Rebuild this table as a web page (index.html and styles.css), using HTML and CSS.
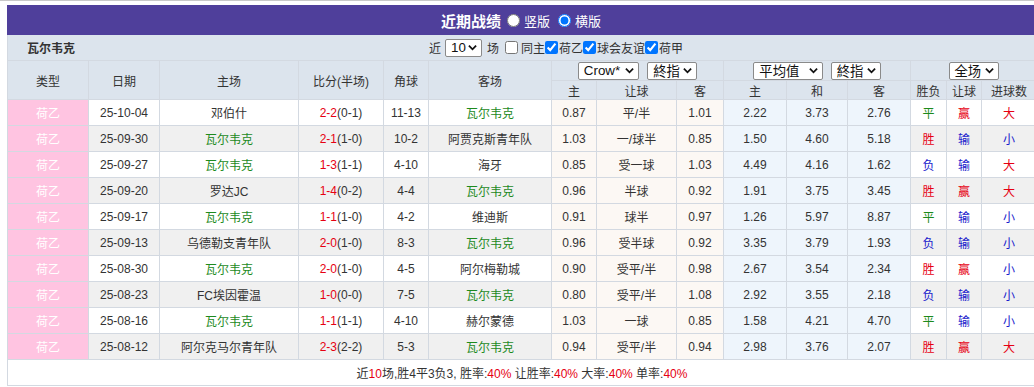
FILE: index.html
```html
<!DOCTYPE html>
<html lang="zh-cn">
<head>
    <meta charset="UTF-8">
    <title>近期战绩</title>
    <link rel="stylesheet" href="styles.css">
</head>
<body>
    <div class="linha-topo"></div>
    <div class="box">
        <div class="box-title">
            <span class="titulo">近期战绩</span>
            <label class="opt"><input type="radio" name="ver">竖版</label>
            <label class="opt"><input type="radio" name="ver" checked>横版</label>
        </div>
        <div class="box-sub">
            <span class="team-name">瓦尔韦克</span>
            <span class="filtros"><span class="txt">近</span><span class="sel w-10">10<svg class="arr" viewBox="0 0 10 7" width="9" height="7"><path d="M1 1.5l4 4 4-4" fill="none" stroke="#111" stroke-width="2"/></svg></span><span class="txt">场</span><input type="checkbox" class="cb-first"><span>同主</span><input type="checkbox" checked><span>荷乙</span><input type="checkbox" checked><span>球会友谊</span><input type="checkbox" checked><span>荷甲</span></span>
        </div>
        <table class="zhanji">
            <colgroup>
                <col style="width:81px"><col style="width:71px"><col style="width:139px"><col style="width:85px">
                <col style="width:45px"><col style="width:123px"><col style="width:45px"><col style="width:80px">
                <col style="width:47px"><col style="width:63px"><col style="width:61px"><col style="width:63px">
                <col style="width:36px"><col style="width:35px"><col style="width:55px">
            </colgroup>
            <thead>
                <tr class="h1">
                    <th rowspan="2">类型</th>
                    <th rowspan="2">日期</th>
                    <th rowspan="2">主场</th>
                    <th rowspan="2">比分(半场)</th>
                    <th rowspan="2">角球</th>
                    <th rowspan="2">客场</th>
                    <th colspan="3">
                        <span class="sel w-crow">Crow*<svg class="arr" viewBox="0 0 10 7" width="9" height="7"><path d="M1 1.5l4 4 4-4" fill="none" stroke="#111" stroke-width="2"/></svg></span>
                        <span class="sel w-zz">終指<svg class="arr" viewBox="0 0 10 7" width="9" height="7"><path d="M1 1.5l4 4 4-4" fill="none" stroke="#111" stroke-width="2"/></svg></span>
                    </th>
                    <th colspan="3">
                        <span class="sel w-avg">平均值<svg class="arr" viewBox="0 0 10 7" width="9" height="7"><path d="M1 1.5l4 4 4-4" fill="none" stroke="#111" stroke-width="2"/></svg></span>
                        <span class="sel w-zz">終指<svg class="arr" viewBox="0 0 10 7" width="9" height="7"><path d="M1 1.5l4 4 4-4" fill="none" stroke="#111" stroke-width="2"/></svg></span>
                    </th>
                    <th colspan="3">
                        <span class="sel w-zz">全场<svg class="arr" viewBox="0 0 10 7" width="9" height="7"><path d="M1 1.5l4 4 4-4" fill="none" stroke="#111" stroke-width="2"/></svg></span>
                    </th>
                </tr>
                <tr class="h2">
                    <th>主</th><th>让球</th><th>客</th>
                    <th>主</th><th>和</th><th>客</th>
                    <th>胜负</th><th>让球</th><th>进球数</th>
                </tr>
            </thead>
            <tbody>
                <tr>
                    <td class="liga">荷乙</td><td>25-10-04</td><td>邓伯什</td>
                    <td><span class="placar">2-2</span>(0-1)</td><td>11-13</td><td class="time">瓦尔韦克</td>
                    <td class="hc">0.87</td><td class="hc">平/半</td><td class="hc">1.01</td>
                    <td class="eu">2.22</td><td class="eu">3.73</td><td class="eu">2.76</td>
                    <td class="ping">平</td><td class="sheng">赢</td><td class="sheng">大</td>
                </tr>
                <tr class="cinza">
                    <td class="liga">荷乙</td><td>25-09-30</td><td class="time">瓦尔韦克</td>
                    <td><span class="placar">2-1</span>(1-0)</td><td>10-2</td><td>阿贾克斯青年队</td>
                    <td class="hc">1.03</td><td class="hc">一/球半</td><td class="hc">0.85</td>
                    <td class="eu">1.50</td><td class="eu">4.60</td><td class="eu">5.18</td>
                    <td class="sheng">胜</td><td class="fu">输</td><td class="fu">小</td>
                </tr>
                <tr>
                    <td class="liga">荷乙</td><td>25-09-27</td><td class="time">瓦尔韦克</td>
                    <td><span class="placar">1-3</span>(1-1)</td><td>4-10</td><td>海牙</td>
                    <td class="hc">0.85</td><td class="hc">受一球</td><td class="hc">1.03</td>
                    <td class="eu">4.49</td><td class="eu">4.16</td><td class="eu">1.62</td>
                    <td class="fu">负</td><td class="fu">输</td><td class="sheng">大</td>
                </tr>
                <tr class="cinza">
                    <td class="liga">荷乙</td><td>25-09-20</td><td>罗达JC</td>
                    <td><span class="placar">1-4</span>(0-2)</td><td>4-4</td><td class="time">瓦尔韦克</td>
                    <td class="hc">0.96</td><td class="hc">半球</td><td class="hc">0.92</td>
                    <td class="eu">1.91</td><td class="eu">3.75</td><td class="eu">3.45</td>
                    <td class="sheng">胜</td><td class="sheng">赢</td><td class="sheng">大</td>
                </tr>
                <tr>
                    <td class="liga">荷乙</td><td>25-09-17</td><td class="time">瓦尔韦克</td>
                    <td><span class="placar">1-1</span>(1-0)</td><td>4-2</td><td>维迪斯</td>
                    <td class="hc">0.91</td><td class="hc">球半</td><td class="hc">0.97</td>
                    <td class="eu">1.26</td><td class="eu">5.97</td><td class="eu">8.87</td>
                    <td class="ping">平</td><td class="fu">输</td><td class="fu">小</td>
                </tr>
                <tr class="cinza">
                    <td class="liga">荷乙</td><td>25-09-13</td><td>乌德勒支青年队</td>
                    <td><span class="placar">2-0</span>(1-0)</td><td>8-3</td><td class="time">瓦尔韦克</td>
                    <td class="hc">0.96</td><td class="hc">受半球</td><td class="hc">0.92</td>
                    <td class="eu">3.35</td><td class="eu">3.79</td><td class="eu">1.93</td>
                    <td class="fu">负</td><td class="fu">输</td><td class="fu">小</td>
                </tr>
                <tr>
                    <td class="liga">荷乙</td><td>25-08-30</td><td class="time">瓦尔韦克</td>
                    <td><span class="placar">2-0</span>(1-0)</td><td>4-5</td><td>阿尔梅勒城</td>
                    <td class="hc">0.90</td><td class="hc">受平/半</td><td class="hc">0.98</td>
                    <td class="eu">2.67</td><td class="eu">3.54</td><td class="eu">2.34</td>
                    <td class="sheng">胜</td><td class="sheng">赢</td><td class="fu">小</td>
                </tr>
                <tr class="cinza">
                    <td class="liga">荷乙</td><td>25-08-23</td><td>FC埃因霍温</td>
                    <td><span class="placar">1-0</span>(0-0)</td><td>7-5</td><td class="time">瓦尔韦克</td>
                    <td class="hc">0.80</td><td class="hc">受平/半</td><td class="hc">1.08</td>
                    <td class="eu">2.92</td><td class="eu">3.55</td><td class="eu">2.18</td>
                    <td class="fu">负</td><td class="fu">输</td><td class="fu">小</td>
                </tr>
                <tr>
                    <td class="liga">荷乙</td><td>25-08-16</td><td class="time">瓦尔韦克</td>
                    <td><span class="placar">1-1</span>(1-1)</td><td>4-10</td><td>赫尔蒙德</td>
                    <td class="hc">1.03</td><td class="hc">一球</td><td class="hc">0.85</td>
                    <td class="eu">1.58</td><td class="eu">4.21</td><td class="eu">4.70</td>
                    <td class="ping">平</td><td class="fu">输</td><td class="fu">小</td>
                </tr>
                <tr class="cinza">
                    <td class="liga">荷乙</td><td>25-08-12</td><td>阿尔克马尔青年队</td>
                    <td><span class="placar">2-3</span>(2-2)</td><td>5-3</td><td class="time">瓦尔韦克</td>
                    <td class="hc">0.94</td><td class="hc">受平/半</td><td class="hc">0.94</td>
                    <td class="eu">2.98</td><td class="eu">3.76</td><td class="eu">2.07</td>
                    <td class="sheng">胜</td><td class="sheng">赢</td><td class="sheng">大</td>
                </tr>
                <tr class="resumo">
                    <td colspan="15">近<span class="verm">10</span>场,胜4平3负3, 胜率:<span class="verm">40%</span> 让胜率:<span class="verm">40%</span> 大率:<span class="verm">40%</span> 单率:<span class="verm">40%</span></td>
                </tr>
            </tbody>
        </table>
    </div>
</body>
</html>
```

FILE: styles.css
```css
:root {
    --cor-roxo: #4f3f9b;
    --cor-cabecalho: #dce4ed;
    --cor-borda: #d3d9e1;
    --cor-texto: #333333;
    --cor-rosa: #ffc4e1;
    --cor-cinza: #f0f0f0;
    --cor-hc: #fcf8f4;
    --cor-eu: #eef5fc;
    --cor-verde: #1d8a1d;
    --cor-vermelho: #e60012;
    --cor-azul: #1a1acc;
}
html { overflow: hidden; }
body {
    margin: 0;
    font-family: "Liberation Sans", "Noto Sans CJK SC", Arial, sans-serif;
    font-size: 12px;
    color: var(--cor-texto);
    background: #fff;
}
.linha-topo { height: 0; border-top: 1px solid #c9c9c9; }
.box { margin: 4px 0 0 7px; width: 1030px; }

.box-title {
    height: 30px; background-color: var(--cor-roxo); color: #fff;
    display: flex; align-items: center; padding-left: 434px;
}
.titulo { font-size: 15px; font-weight: 700; margin-right: 6px; }
.opt { display: inline-flex; align-items: center; font-size: 13px; margin-right: 8px; }
.opt input { width: 13px; height: 13px; margin: 0 4px 0 0; }

.box-sub {
    height: 25px; background-color: var(--cor-cabecalho);
    border-left: 1px solid var(--cor-borda);
    display: flex; align-items: center;
}
.team-name { flex: 0 0 402px; padding-left: 19px; font-weight: 700; font-size: 12px; }
.filtros { display: flex; align-items: center; }
.filtros .txt { margin-right: 4px; }
.filtros .sel { margin-right: 5px; }
.filtros input { width: 13px; height: 13px; margin: 0 1px 0 0; }
.filtros .cb-first { margin: 0 3px 0 2px; }

.sel {
    display: inline-flex; align-items: center; justify-content: space-between;
    box-sizing: border-box; height: 18px; padding: 0 4px 0 5px;
    background: #fff; border: 1px solid #8a8a8a; border-radius: 2px;
    font-size: 13.33px; color: #111; vertical-align: middle;
}
.arr { display: block; }
.w-10 { width: 37px; }
.w-crow { width: 61px; margin-right: 5px; }
.w-zz { width: 50px; }
.w-avg { width: 70px; margin-right: 4px; }

table.zhanji { border-collapse: collapse; table-layout: fixed; width: 1030px; }
.zhanji th, .zhanji td {
    border: 1px solid var(--cor-borda); padding: 0; text-align: center;
    white-space: nowrap; overflow: hidden;
}
.zhanji th { background-color: var(--cor-cabecalho); font-weight: normal; }
.zhanji tr.h1 th { height: 19px; }
.zhanji tr.h2 th { height: 18px; }
.zhanji td { height: 25px; background-color: #fff; }
.zhanji tr.cinza td { background-color: var(--cor-cinza); }
.zhanji td.liga, .zhanji tr.cinza td.liga { background-color: var(--cor-rosa); color: #fff; }
.zhanji td.hc, .zhanji tr.cinza td.hc { background-color: var(--cor-hc); }
.zhanji td.eu, .zhanji tr.cinza td.eu { background-color: var(--cor-eu); }
.time { color: var(--cor-verde); }
.placar, .sheng, .verm { color: var(--cor-vermelho); }
.ping { color: var(--cor-verde); }
.fu { color: var(--cor-azul); }
.zhanji tr.resumo td { background-color: #fff; height: 25px; }
```
